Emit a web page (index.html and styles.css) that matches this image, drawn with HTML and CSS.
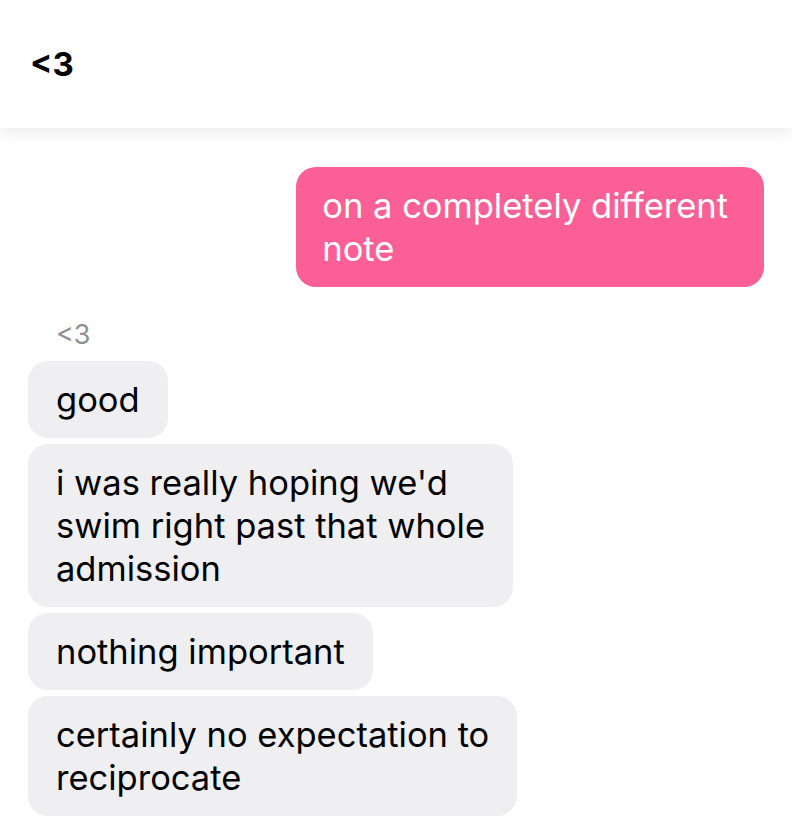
FILE: index.html
```html
<!DOCTYPE html>
<html lang="en">
<head>
    <meta charset="UTF-8">
    <meta name="viewport" content="width=device-width, initial-scale=1.0">
    <title>&lt;3</title>
    <link rel="stylesheet" href="styles.css">
</head>
<body>
    <header class="top-bar">
        <h1>&lt;3</h1>
    </header>

    <!-- Conversation -->
    <main class="thread">
        <div class="row out">
            <div class="bubble sent">on a completely different<br>note</div>
        </div>

        <div class="sender">&lt;3</div>
        <div class="row">
            <div class="bubble received">good</div>
        </div>
        <div class="row">
            <div class="bubble received">i was really hoping we'd<br>swim right past that whole<br>admission</div>
        </div>
        <div class="row">
            <div class="bubble received">nothing important</div>
        </div>
        <div class="row">
            <div class="bubble received">certainly no expectation to<br>reciprocate</div>
        </div>
    </main>
</body>
</html>
```

FILE: styles.css
```css
body {
    font-family: 'Inter', 'Liberation Sans', sans-serif;
    background-color: #fff;
    margin: 0;
    color: #000;
}
.top-bar {
    height: 128px;
    background: #fff;
    box-shadow: 0 4px 16px rgba(0, 0, 0, 0.09);
    display: flex;
    align-items: center;
    padding: 0 30px;
    position: relative;
}
.top-bar h1 {
    margin: 0;
    font-size: 33px;
    font-weight: 700;
}
.thread {
    padding: 39px 28px 0;
    display: flex;
    flex-direction: column;
    gap: 6px;
}
.row {
    display: flex;
}
.row.out {
    justify-content: flex-end;
    margin-bottom: 24px;
}
.bubble {
    padding: 17px 28px;
    border-radius: 20px;
    font-size: 34.5px;
    line-height: 43px;
}
.sent {
    background-color: #fa5f95;
    color: #fff;
    padding: 17px 36px 17px 26px;
}
.received {
    background-color: #efeff2;
}
.sender {
    padding-left: 28px;
    font-size: 27px;
    line-height: 36px;
    color: #8e8e93;
    margin-bottom: 2px;
}
```
